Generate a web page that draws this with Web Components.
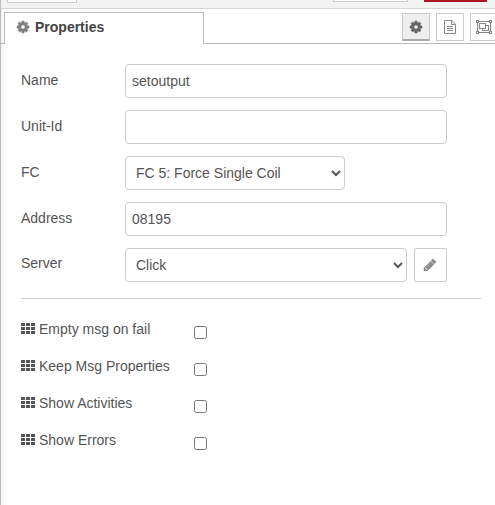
<!DOCTYPE html>
<html lang="en">
<head>
<meta charset="utf-8">
<title>Properties</title>
<style>
html,body{margin:0;height:100%;overflow:hidden;background:#fff}
body{font:14px/20px "Liberation Sans",Arial,sans-serif;color:#555}
tray-tabs{margin-bottom:17px}
</style>
</head>
<body>
<editor-tray>
  <tray-toolbar></tray-toolbar>
  <tray-tabs>Properties</tray-tabs>
  <form-row label="Name"><text-field value="setoutput"></text-field></form-row>
  <form-row label="Unit-Id"><text-field value=""></text-field></form-row>
  <form-row label="FC"><select-field value="FC 5: Force Single Coil" style="width:220px"></select-field></form-row>
  <form-row label="Address"><text-field value="08195"></text-field></form-row>
  <form-row label="Server" class="server"><select-field value="Click" style="width:282px"></select-field><edit-button></edit-button></form-row>
  <form-divider></form-divider>
  <check-row>Empty msg on fail</check-row>
  <check-row>Keep Msg Properties</check-row>
  <check-row>Show Activities</check-row>
  <check-row>Show Errors</check-row>
</editor-tray>
<script>
const define = (name, html, setup) => customElements.define(name, class extends HTMLElement {
  constructor() {
    super();
    this.attachShadow({mode: 'open'}).innerHTML = '<style>*{box-sizing:border-box}:host{box-sizing:border-box}</style>' + html;
  }
  connectedCallback() { if (setup) setup(this, this.shadowRoot); }
});

const icons = {
  cog: ['128 128 1536 1536', '<path fill="currentColor" stroke="currentColor" stroke-width="70" d="M1152 896q0-106-75-181t-181-75-181 75-75 181 75 181 181 75 181-75 75-181zm512-109v222q0 12-8 23t-20 13l-185 28q-19 54-39 91 35 50 107 138 10 12 10 25t-9 23q-27 37-99 108t-94 71q-12 0-26-9l-138-108q-44 23-91 38-16 136-29 186-7 28-36 28h-222q-14 0-24.5-8.5t-11.5-21.5l-28-184q-49-16-90-37l-141 107q-10 9-25 9-14 0-25-11-126-114-165-168-7-10-7-23 0-12 8-23 15-21 51-66.5t54-70.5q-27-50-41-99l-183-27q-13-2-21-12.5t-8-23.5v-222q0-12 8-23t19-13l186-28q14-46 39-92-40-57-107-138-10-12-10-24 0-10 9-23 26-36 98.5-107.5t94.5-71.5q13 0 26 10l138 107q44-23 91-38 16-136 29-186 7-28 36-28h222q14 0 24.5 8.5t11.5 21.5l28 184q49 16 90 37l142-107q9-9 24-9 13 0 25 10 129 119 165 170 7 8 7 22 0 12-8 23-15 21-51 66.5t-54 70.5q26 50 41 98l183 28q13 2 21 12.5t8 23.5z"/>'],
  file: ['0 0 12 14', '<path fill="none" stroke="currentColor" d="M.5 .5h7.2L11.5 4.300V13.500H.5zM7.500 .5v4h4M3 6.500h6M3 8.500h6M3 10.500h6"/>'],
  group: ['0 0 16 14', '<path fill="none" stroke="currentColor" stroke-width="1.1" d="M.5 .5h2v2h-2zM13.500 .5h2v2h-2zM.5 11.500h2v2h-2zM13.500 11.500h2v2h-2zM3 1.500h10M3 12.500h10M1.500 3v8M14.500 3v8M3.500 3.500h6v5h-6zM10 5.500h2.500v5h-6V9"/>'],
  pencil: ['128 128 1536 1536', '<path fill="currentColor" stroke="currentColor" stroke-width="50" d="M491 1536l91-91-235-235-91 91v107h128v128h107zm523-928q0-22-22-22-10 0-17 7l-542 542q-7 7-7 17 0 22 22 22 10 0 17-7l542-542q7-7 7-17zm-54-192l416 416-832 832h-416v-416zm683 96q0 53-37 90l-166 166-416-416 166-165q36-38 90-38 53 0 91 38l235 234q37 39 37 91z"/>'],
  grid: ['0 0 14 11', '<path fill="currentColor" d="' + [0,5,10].flatMap(x => [0,4,8].map(y => `M${x+.2} ${y}h3.700l.2 .2v2.700l-.2 .2h-3.700l-.2-.2v-2.700z`)).join('') + '"/>']
};
define('ui-icon', '<style>:host{display:block;flex:none}span,svg{display:block}svg{overflow:visible}</style><span></span>', (el, root) => {
  const [box, body] = icons[el.getAttribute('name')];
  const w = el.getAttribute('w'), h = el.getAttribute('h');
  root.querySelector('span').innerHTML = `<svg width="${w}" height="${h}" viewBox="${box}">${body}</svg>`;
});

define('editor-tray', `<style>
:host{display:block;height:505px;border-left:1px solid #bbb;background:linear-gradient(90deg,#f3f3f3,#fff 5px)}
</style><slot></slot>`);

define('tray-toolbar', `<style>
:host{display:flex;height:9px;background:#f3f3f3;border-bottom:1px solid #d6d6d6;padding-left:6px;align-items:flex-start}
i{display:block;height:3px;border:1px solid #ccc;border-top:0;background:#fff}
.a{width:70px}.b{width:75px;height:2px;margin-left:256px}.c{width:63px;height:2px;margin-left:16px;background:#ad1625;border:0}
</style><i class="a"></i><i class="b"></i><i class="c"></i>`);

define('tray-tabs', `<style>
:host{display:flex;height:35px;margin-top:3px}
.lead{width:3px;border-bottom:1px solid #bbb}
.tab{width:200px;height:32px;border:1px solid #bbb;border-bottom:0;display:flex;align-items:center;padding:0 0 3px 12px;gap:6px;font-weight:bold;color:#444;background:#fff}
.tab ui-icon{color:#808080}
.lead,.rest{height:32px}
.rest{flex:1;border-bottom:1px solid #bbb;display:flex;gap:6px;padding:1px 0 0 198px;overflow:hidden}
b{flex:none;width:28px;height:28px;border:1px solid #ccc;display:flex;align-items:center;justify-content:center;color:#888}
b.on{background:#efefef;border-bottom:2px solid #aaa;color:#666}
</style><div class="lead"></div><div class="tab"><ui-icon name="cog" w="12" h="12"></ui-icon><slot></slot></div>
<div class="rest"><b class="on"><ui-icon name="cog" w="12" h="12"></ui-icon></b><b><ui-icon name="file" w="12" h="14"></ui-icon></b><b><ui-icon name="group" w="16" h="14"></ui-icon></b></div>`);

define('form-row', `<style>
:host{display:flex;height:34px;margin:0 0 12px 20px}
label{width:104px;flex:none;padding-top:6px}
:host(.server) label{padding-top:5px}
</style><label></label><slot></slot>`, (el, root) => root.querySelector('label').textContent = el.getAttribute('label'));

define('text-field', `<style>
:host{display:block;width:322px}
input{display:block;width:100%;height:34px;border:1px solid #ccc;border-radius:4px;padding:0 6px;margin:0;font:inherit;color:#555;background:#fff}
</style><input type="text">`, (el, root) => root.querySelector('input').value = el.getAttribute('value'));

define('select-field', `<style>
:host{display:block}
select{display:block;width:100%;height:34px;border:1px solid #ccc;border-radius:4px;padding:4px 6px;margin:0;font:inherit;color:#555;background:#fff}
</style><select><option></option></select>`, (el, root) => root.querySelector('option').textContent = el.getAttribute('value'));

define('edit-button', `<style>
:host{display:flex;width:33px;height:34px;margin-left:7px;border:1px solid #ccc;border-radius:2px;align-items:center;justify-content:center;padding:0 1px 1px 0;color:#888}
</style><ui-icon name="pencil" w="12" h="12"></ui-icon>`);

define('form-divider', '<style>:host{display:block;width:460px;height:1px;background:#ccc;margin:16px 0 20px 20px}</style>');

define('check-row', `<style>
:host{display:flex;height:20px;margin:0 0 17px 20px}
label{display:flex;width:172.5px;gap:4px}
ui-icon{padding-top:4px}
input{width:13px;height:13px;margin:7px 0 0}
</style><label><ui-icon name="grid" w="14" h="11"></ui-icon><slot></slot></label><input type="checkbox">`);
</script>
</body>
</html>
